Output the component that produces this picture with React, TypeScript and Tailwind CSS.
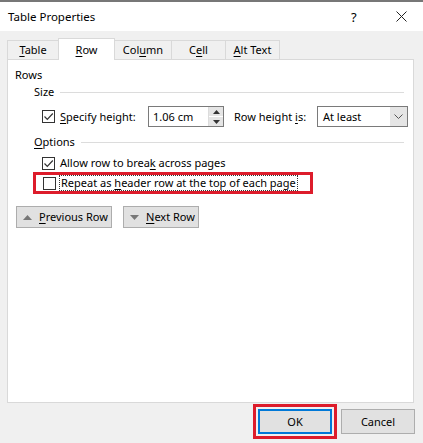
import React from 'react';

// チェックボックス
function Check({ checked }: { checked?: boolean }) {
  return (
    <span className="w-[13px] h-[13px] border border-[#333] bg-white flex items-center justify-center shrink-0">
      {checked && (
        <svg width="11" height="11" viewBox="0 0 11 11">
          <path d="M1.5 5.5 L4.3 8.3 L9.8 2.5" fill="none" stroke="#333" strokeWidth="1.2" />
        </svg>
      )}
    </span>
  );
}

function Tab({ label, w, active }: { label: [string, string, string]; w: string; active?: boolean }) {
  return (
    <div
      className={
        (active
          ? 'h-[22px] bg-white border border-[#d9d9d9] border-b-0 flex items-center justify-center relative z-10 -mb-px '
          : 'h-[19px] bg-[#f0f0f0] border border-l-0 border-[#d9d9d9] border-b-0 flex items-center justify-center ') + w
      }
    >
      <span className="whitespace-nowrap">
        {label[0]}
        <span className="underline underline-offset-2">{label[1]}</span>
        {label[2]}
      </span>
    </div>
  );
}

function GroupLabel({ children }: { children: React.ReactNode }) {
  return (
    <div className="flex items-center h-[16px] pl-[26px] pr-[9px]">
      <span className="whitespace-nowrap">{children}</span>
      <span className="flex-1 h-px bg-[#dcdcdc] ml-[6px]" />
    </div>
  );
}

export default function App() {
  return (
    <div
      className="w-[423px] h-[443px] bg-[#f0f0f0] border-t-2 border-[#777] flex flex-col text-[11px] text-black leading-[16px]"
      style={{ fontFamily: '"Noto Sans", "Segoe UI", sans-serif' }}
    >
      {/* タイトルバー */}
      <div className="h-[29px] bg-white flex items-center pl-[8px] text-[11.5px]">
        <span className="flex-1">Table Properties</span>
        <span className="w-[12px] text-[13px] mr-[33px]">?</span>
        <svg width="11" height="11" viewBox="0 0 11 11" className="mr-[16px]">
          <path d="M0.5 0.5 L10.5 10.5 M10.5 0.5 L0.5 10.5" stroke="#222" strokeWidth="1" />
        </svg>
      </div>

      {/* タブ */}
      <div className="flex items-end pl-[7px] mt-[7px]">
        <div className="h-[19px] w-[51px] bg-[#f0f0f0] border border-[#d9d9d9] border-b-0 border-r-0 flex items-center justify-center">
          <span>
            <span className="underline underline-offset-2">T</span>able
          </span>
        </div>
        <Tab label={['', 'R', 'ow']} w="w-[57px]" active />
        <Tab label={['Col', 'u', 'mn']} w="w-[57px]" />
        <Tab label={['C', 'e', 'll']} w="w-[54px]" />
        <Tab label={['', 'A', 'lt Text']} w="w-[54px]" />
      </div>

      {/* パネル */}
      <div className="ml-[7px] mr-[9px] h-[344px] bg-white border border-[#d9d9d9] flex flex-col">
        <div className="mt-[7px] pl-[7px] h-[16px]">Rows</div>
        <div className="mt-[1px]">
          <GroupLabel>Size</GroupLabel>
        </div>

        <div className="mt-[6px] flex items-center h-[21px] pl-[34px]">
          <Check checked />
          <span className="ml-[5px] w-[88px] whitespace-nowrap">
            <span className="underline underline-offset-2">S</span>pecify height:
          </span>
          <div className="w-[76px] h-[21px] border border-[#7a7a7a] flex">
            <span className="flex-1 pl-[4px] flex items-center">1.06 cm</span>
            <div className="w-[15px] flex flex-col border-l border-[#dcdcdc]">
              <span className="flex-1 bg-[#e5e5e5] border-b border-white flex items-center justify-center">
                <svg width="7" height="4" viewBox="0 0 7 4">
                  <path d="M0 4 L3.5 0 L7 4 Z" fill="#333" />
                </svg>
              </span>
              <span className="flex-1 bg-[#e5e5e5] flex items-center justify-center">
                <svg width="7" height="4" viewBox="0 0 7 4">
                  <path d="M0 0 L3.5 4 L7 0 Z" fill="#333" />
                </svg>
              </span>
            </div>
          </div>
          <span className="ml-[10px] w-[83px] whitespace-nowrap">
            Row height <span className="underline underline-offset-2">i</span>s:
          </span>
          <div className="w-[91px] h-[21px] border border-[#7a7a7a] flex">
            <span className="flex-1 pl-[5px] flex items-center">At least</span>
            <span className="w-[17px] bg-[#e5e5e5] flex items-center justify-center">
              <svg width="9" height="5" viewBox="0 0 9 5">
                <path d="M0.5 0.5 L4.5 4.5 L8.5 0.5" fill="none" stroke="#555" strokeWidth="1" />
              </svg>
            </span>
          </div>
        </div>

        <div className="mt-[7px]">
          <GroupLabel>
            <span className="underline underline-offset-2">O</span>ptions
          </GroupLabel>
        </div>

        <div className="mt-[5px] flex items-center h-[16px] pl-[34px]">
          <Check checked />
          <span className="ml-[5px] whitespace-nowrap">
            Allow row to brea<span className="underline underline-offset-2">k</span> across pages
          </span>
        </div>

        <div className="mt-[1px] ml-[25px] w-[280px] h-[22px] border-[3px] border-[#dd1c2b] flex items-center pl-[7px]">
          <Check />
          <span className="ml-[3px] border border-dotted border-[#333] px-px leading-[14px] whitespace-nowrap">
            Repeat as <span className="underline underline-offset-2">h</span>eader row at the top of each page
          </span>
        </div>

        <div className="mt-[12px] flex pl-[8px] gap-[11px]">
          <button className="h-[22px] w-[96px] bg-[#e1e1e1] border border-[#adadad] flex items-center pl-[6px]">
            <svg width="9" height="5" viewBox="0 0 9 5">
              <path d="M0 5 L4.5 0 L9 5 Z" fill="#777" />
            </svg>
            <span className="ml-[7px] whitespace-nowrap">
              <span className="underline underline-offset-2">P</span>revious Row
            </span>
          </button>
          <button className="h-[22px] w-[76px] bg-[#e1e1e1] border border-[#adadad] flex items-center pl-[6px]">
            <svg width="9" height="5" viewBox="0 0 9 5">
              <path d="M0 0 L4.5 5 L9 0 Z" fill="#777" />
            </svg>
            <span className="ml-[7px] whitespace-nowrap">
              <span className="underline underline-offset-2">N</span>ext Row
            </span>
          </button>
        </div>
      </div>

      {/* フッター */}
      <div className="flex justify-end items-center pr-[8px] mt-[1px] gap-[4px]">
        <div className="border-[3px] border-[#dd1c2b] p-[2px]">
          <button className="w-[74px] h-[25px] bg-[#e1e1e1] border-2 border-[#0078d7] flex items-center justify-center">
            OK
          </button>
        </div>
        <button className="w-[74px] h-[25px] bg-[#e1e1e1] border border-[#adadad] flex items-center justify-center">
          Cancel
        </button>
      </div>
    </div>
  );
}
